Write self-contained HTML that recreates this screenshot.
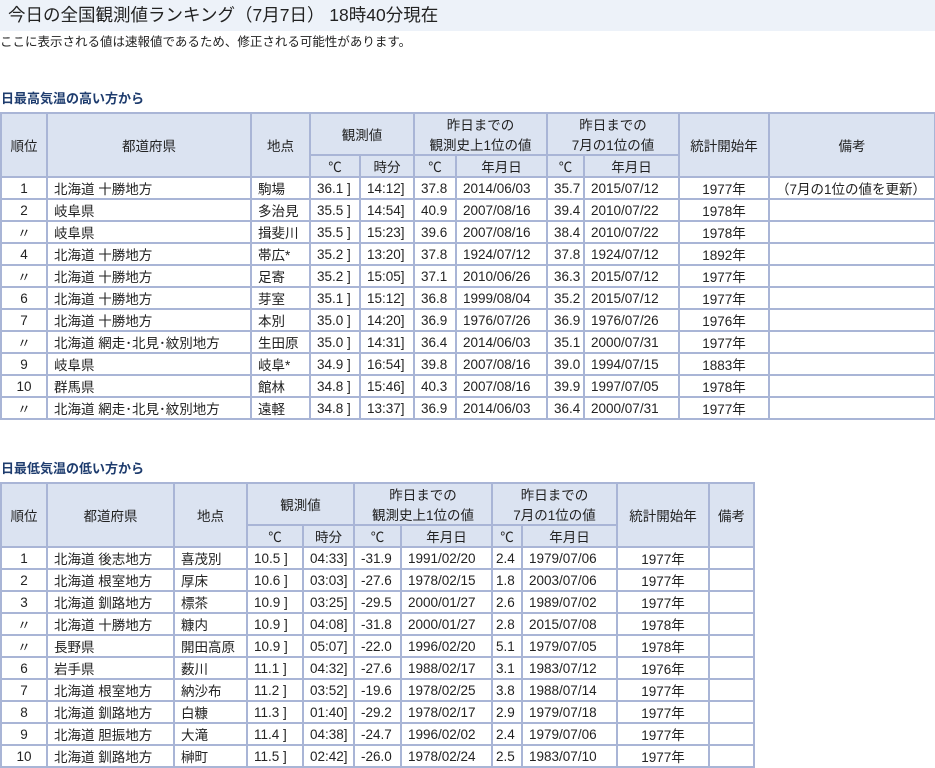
<!DOCTYPE html>
<html><head><meta charset="utf-8"><style>
body{margin:0;background:#fff;font-family:"Liberation Sans","Noto Sans CJK JP",sans-serif;color:#222;width:935px;height:767px;overflow:hidden;position:relative}
.t{position:absolute;left:0;top:0;width:935px;height:31px;background:#edf2f9;font-size:17.5px;line-height:30px;padding-left:8px;box-sizing:border-box;color:#222}
.s{position:absolute;left:0;top:31px;font-size:12.5px}
h3{position:absolute;left:1px;margin:0;font-size:13px;color:#1e3c6e;font-weight:bold}
table{position:absolute;left:0;border-collapse:collapse;table-layout:fixed;font-size:13.5px}
td,th{border:2px solid #a9b5d6;padding:0 0 0 6px;height:19px;white-space:nowrap;overflow:hidden;font-weight:normal;text-align:left}
th{background:#dbe3f1;text-align:center;padding:0}
td.c{text-align:center;padding:0}
</style></head><body>
<div class="t">今日の全国観測値ランキング（7月7日） 18時40分現在</div>
<div class="s">ここに表示される値は速報値であるため、修正される可能性があります。</div>
<h3 style="top:88px">日最高気温の高い方から</h3>
<table style="top:112px;width:934px">
<colgroup><col style="width:46px"><col style="width:204px"><col style="width:59px"><col style="width:50px"><col style="width:54px"><col style="width:42px"><col style="width:91px"><col style="width:37px"><col style="width:95px"><col style="width:90px"><col style="width:166px"></colgroup>
<tr><th rowspan="2">順位</th><th rowspan="2">都道府県</th><th rowspan="2">地点</th><th colspan="2" style="height:40px">観測値</th><th colspan="2">昨日までの<br>観測史上1位の値</th><th colspan="2">昨日までの<br>7月の1位の値</th><th rowspan="2">統計開始年</th><th rowspan="2">備考</th></tr>
<tr><th>℃</th><th>時分</th><th>℃</th><th>年月日</th><th>℃</th><th>年月日</th></tr>
<tr><td class="c">1</td><td>北海道 十勝地方</td><td>駒場</td><td>36.1 ]</td><td>14:12]</td><td>37.8</td><td>2014/06/03</td><td>35.7</td><td>2015/07/12</td><td class="c">1977年</td><td>（7月の1位の値を更新）</td></tr>
<tr><td class="c">2</td><td>岐阜県</td><td>多治見</td><td>35.5 ]</td><td>14:54]</td><td>40.9</td><td>2007/08/16</td><td>39.4</td><td>2010/07/22</td><td class="c">1978年</td><td></td></tr>
<tr><td class="c">〃</td><td>岐阜県</td><td>揖斐川</td><td>35.5 ]</td><td>15:23]</td><td>39.6</td><td>2007/08/16</td><td>38.4</td><td>2010/07/22</td><td class="c">1978年</td><td></td></tr>
<tr><td class="c">4</td><td>北海道 十勝地方</td><td>帯広*</td><td>35.2 ]</td><td>13:20]</td><td>37.8</td><td>1924/07/12</td><td>37.8</td><td>1924/07/12</td><td class="c">1892年</td><td></td></tr>
<tr><td class="c">〃</td><td>北海道 十勝地方</td><td>足寄</td><td>35.2 ]</td><td>15:05]</td><td>37.1</td><td>2010/06/26</td><td>36.3</td><td>2015/07/12</td><td class="c">1977年</td><td></td></tr>
<tr><td class="c">6</td><td>北海道 十勝地方</td><td>芽室</td><td>35.1 ]</td><td>15:12]</td><td>36.8</td><td>1999/08/04</td><td>35.2</td><td>2015/07/12</td><td class="c">1977年</td><td></td></tr>
<tr><td class="c">7</td><td>北海道 十勝地方</td><td>本別</td><td>35.0 ]</td><td>14:20]</td><td>36.9</td><td>1976/07/26</td><td>36.9</td><td>1976/07/26</td><td class="c">1976年</td><td></td></tr>
<tr><td class="c">〃</td><td>北海道 網走･北見･紋別地方</td><td>生田原</td><td>35.0 ]</td><td>14:31]</td><td>36.4</td><td>2014/06/03</td><td>35.1</td><td>2000/07/31</td><td class="c">1977年</td><td></td></tr>
<tr><td class="c">9</td><td>岐阜県</td><td>岐阜*</td><td>34.9 ]</td><td>16:54]</td><td>39.8</td><td>2007/08/16</td><td>39.0</td><td>1994/07/15</td><td class="c">1883年</td><td></td></tr>
<tr><td class="c">10</td><td>群馬県</td><td>館林</td><td>34.8 ]</td><td>15:46]</td><td>40.3</td><td>2007/08/16</td><td>39.9</td><td>1997/07/05</td><td class="c">1978年</td><td></td></tr>
<tr><td class="c">〃</td><td>北海道 網走･北見･紋別地方</td><td>遠軽</td><td>34.8 ]</td><td>13:37]</td><td>36.9</td><td>2014/06/03</td><td>36.4</td><td>2000/07/31</td><td class="c">1977年</td><td></td></tr>
</table>
<h3 style="top:458px">日最低気温の低い方から</h3>
<table style="top:482px;width:753px">
<colgroup><col style="width:46px"><col style="width:127px"><col style="width:73px"><col style="width:56px"><col style="width:51px"><col style="width:47px"><col style="width:91px"><col style="width:30px"><col style="width:95px"><col style="width:92px"><col style="width:45px"></colgroup>
<tr><th rowspan="2">順位</th><th rowspan="2">都道府県</th><th rowspan="2">地点</th><th colspan="2" style="height:40px">観測値</th><th colspan="2">昨日までの<br>観測史上1位の値</th><th colspan="2">昨日までの<br>7月の1位の値</th><th rowspan="2">統計開始年</th><th rowspan="2">備考</th></tr>
<tr><th>℃</th><th>時分</th><th>℃</th><th>年月日</th><th>℃</th><th>年月日</th></tr>
<tr><td class="c">1</td><td>北海道 後志地方</td><td>喜茂別</td><td>10.5 ]</td><td>04:33]</td><td>-31.9</td><td>1991/02/20</td><td style="padding-left:3px">2.4</td><td>1979/07/06</td><td class="c">1977年</td><td></td></tr>
<tr><td class="c">2</td><td>北海道 根室地方</td><td>厚床</td><td>10.6 ]</td><td>03:03]</td><td>-27.6</td><td>1978/02/15</td><td style="padding-left:3px">1.8</td><td>2003/07/06</td><td class="c">1977年</td><td></td></tr>
<tr><td class="c">3</td><td>北海道 釧路地方</td><td>標茶</td><td>10.9 ]</td><td>03:25]</td><td>-29.5</td><td>2000/01/27</td><td style="padding-left:3px">2.6</td><td>1989/07/02</td><td class="c">1977年</td><td></td></tr>
<tr><td class="c">〃</td><td>北海道 十勝地方</td><td>糠内</td><td>10.9 ]</td><td>04:08]</td><td>-31.8</td><td>2000/01/27</td><td style="padding-left:3px">2.8</td><td>2015/07/08</td><td class="c">1978年</td><td></td></tr>
<tr><td class="c">〃</td><td>長野県</td><td>開田高原</td><td>10.9 ]</td><td>05:07]</td><td>-22.0</td><td>1996/02/20</td><td style="padding-left:3px">5.1</td><td>1979/07/05</td><td class="c">1978年</td><td></td></tr>
<tr><td class="c">6</td><td>岩手県</td><td>薮川</td><td>11.1 ]</td><td>04:32]</td><td>-27.6</td><td>1988/02/17</td><td style="padding-left:3px">3.1</td><td>1983/07/12</td><td class="c">1976年</td><td></td></tr>
<tr><td class="c">7</td><td>北海道 根室地方</td><td>納沙布</td><td>11.2 ]</td><td>03:52]</td><td>-19.6</td><td>1978/02/25</td><td style="padding-left:3px">3.8</td><td>1988/07/14</td><td class="c">1977年</td><td></td></tr>
<tr><td class="c">8</td><td>北海道 釧路地方</td><td>白糠</td><td>11.3 ]</td><td>01:40]</td><td>-29.2</td><td>1978/02/17</td><td style="padding-left:3px">2.9</td><td>1979/07/18</td><td class="c">1977年</td><td></td></tr>
<tr><td class="c">9</td><td>北海道 胆振地方</td><td>大滝</td><td>11.4 ]</td><td>04:38]</td><td>-24.7</td><td>1996/02/02</td><td style="padding-left:3px">2.4</td><td>1979/07/06</td><td class="c">1977年</td><td></td></tr>
<tr><td class="c">10</td><td>北海道 釧路地方</td><td>榊町</td><td>11.5 ]</td><td>02:42]</td><td>-26.0</td><td>1978/02/24</td><td style="padding-left:3px">2.5</td><td>1983/07/10</td><td class="c">1977年</td><td></td></tr>
</table>
</body></html>
